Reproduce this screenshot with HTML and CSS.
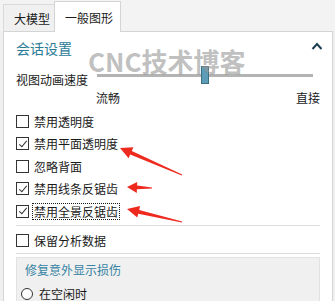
FILE: index.html
```html
<!DOCTYPE html>
<html>
<head>
    <title>一般图形</title>
    <link rel="stylesheet" href="styles.css">
</head>
<body>
    <div class="window">
        <div class="tabs">
            <div class="tab">大模型</div>
            <div class="tab active">一般图形</div>
        </div>
        <div class="panel">
            <div class="section-head">
                <span>会话设置</span>
                <svg class="chevron" width="12" height="8" viewBox="0 0 12 8">
                    <polyline points="1.5,7 6,2 10.5,7" fill="none" stroke="#1d3f52" stroke-width="2"/>
                </svg>
            </div>
            <div class="slider-row">
                <span class="slider-label">视图动画速度</span>
                <div class="track">
                    <div class="thumb"></div>
                </div>
            </div>
            <div class="slider-ends">
                <span>流畅</span>
                <span>直接</span>
            </div>
            <div class="checks">
                <div class="check"><span class="box"></span><span>禁用透明度</span></div>
                <div class="check"><span class="box on"></span><span>禁用平面透明度</span></div>
                <div class="check"><span class="box"></span><span>忽略背面</span></div>
                <div class="check"><span class="box on"></span><span>禁用线条反锯齿</span></div>
                <div class="check"><span class="box on"></span><span class="focus">禁用全景反锯齿</span></div>
            </div>
            <div class="sep"></div>
            <div class="check"><span class="box"></span><span>保留分析数据</span></div>
            <div class="sep second"></div>
            <div class="group">
                <div class="group-title">修复意外显示损伤</div>
                <div class="radio"><span class="circle"></span><span>在空闲时</span></div>
            </div>
        </div>
        <div class="watermark">CNC技术博客</div>
        <svg class="arrows" width="335" height="301" viewBox="0 0 335 301">
            <polygon points="120,148 133.4,147.3 131.8,151 182.2,174.5 181.8,175.5 130.2,154.6 128.6,158.3"/>
            <polygon points="127,187 137.2,181.9 137.1,185.6 152,187.6 152,188.4 136.9,189.2 136.8,192.9"/>
            <polygon points="127,209 140.1,206 139.2,209.9 182.1,221.5 181.9,222.5 138.2,213.7 137.3,217.6"/>
        </svg>
    </div>
</body>
</html>
```

FILE: styles.css
```css
html, body {
    margin: 0;
    padding: 0;
    height: 100%;
    overflow: hidden;
}

body {
    background-color: #f0f0f0;
    font-family: "Noto Sans CJK SC", "Microsoft YaHei", sans-serif;
    font-size: 12px;
    color: #1a1a1a;
}

.window {
    position: relative;
    height: 100%;
}

.tabs {
    display: flex;
    align-items: flex-end;
    height: 31px;
    padding-left: 3px;
    background-color: #f3f3f3;
}

.tab {
    box-sizing: border-box;
    display: flex;
    align-items: center;
    height: 27px;
    padding: 0 4px 0 10px;
    border: 1px solid #dadada;
    border-bottom: none;
    border-right: none;
    background-color: #f0f0f0;
    font-size: 12px;
}

.tab.active {
    position: relative;
    height: 31px;
    padding: 0 7px 0 10px;
    margin-bottom: -1px;
    border-right: 1px solid #d4d4d4;
    border-color: #d4d4d4;
    background-color: #ffffff;
    z-index: 1;
}

.panel {
    box-sizing: border-box;
    height: 270px;
    margin-left: 3px;
    margin-right: 2px;
    padding: 0 12px;
    border: 1px solid #d4d4d4;
    border-bottom: none;
    background-color: #ffffff;
}

.section-head {
    display: flex;
    justify-content: space-between;
    align-items: center;
    height: 32px;
    color: #2b7b98;
    font-size: 14px;
}

.chevron {
    margin-right: -3px;
    margin-top: -4px;
}

.slider-row {
    display: flex;
    align-items: flex-start;
    height: 26px;
}

.slider-label {
    flex: 0 0 81px;
    padding-top: 9px;
    line-height: 14px;
}

.track {
    position: relative;
    flex: 0 0 216px;
    height: 18px;
    margin-top: 2px;
}

.track::before {
    content: "";
    position: absolute;
    left: 0;
    right: 0;
    top: 8px;
    height: 3px;
    background-color: #b3b3b3;
}

.thumb {
    position: absolute;
    left: 104px;
    top: 0;
    box-sizing: border-box;
    width: 8px;
    height: 18px;
    border: 1px solid #3e6e82;
    background-color: #5c9cb6;
}

.slider-ends {
    display: flex;
    justify-content: space-between;
    height: 16px;
    line-height: 16px;
    padding-left: 80px;
    margin-bottom: 4px;
}

.check {
    display: flex;
    align-items: center;
    height: 22.5px;
}

.box {
    box-sizing: border-box;
    width: 13px;
    height: 13px;
    margin-right: 5px;
    border: 1px solid #333333;
    background-color: #ffffff;
    position: relative;
}

.box.on::after {
    content: "";
    position: absolute;
    left: 3.5px;
    top: 0.5px;
    width: 3px;
    height: 7px;
    border: solid #333333;
    border-width: 0 1px 1px 0;
    transform: rotate(40deg);
}

.focus {
    margin-left: -2px;
    padding: 0 1px;
    line-height: 15px;
    border: 1px dotted #1a1a1a;
}

.sep {
    height: 1px;
    margin-top: 2px;
    margin-bottom: 3.5px;
    background-color: #dcdcdc;
}

.sep.second {
    margin-top: 1px;
    margin-bottom: 3px;
}

.group {
    box-sizing: border-box;
    height: 45px;
    padding: 4px 0 0 4px;
    border: 1px solid #e2e2e2;
    border-bottom: none;
    background-color: #f0f0f0;
}

.group-title {
    padding-left: 4px;
    line-height: 16px;
    color: #3683a3;
}

.radio {
    display: flex;
    align-items: center;
    height: 24px;
    margin-top: 4px;
}

.circle {
    box-sizing: border-box;
    width: 12px;
    height: 12px;
    margin-right: 6px;
    border: 1px solid #333333;
    border-radius: 50%;
    background-color: #ffffff;
}

.watermark {
    position: absolute;
    left: 88px;
    top: 44px;
    font-size: 26px;
    font-weight: bold;
    line-height: 34px;
    color: rgba(150, 150, 150, 0.6);
    pointer-events: none;
}

.arrows {
    position: absolute;
    left: 0;
    top: 0;
    fill: #ee2a1f;
    pointer-events: none;
}
```
